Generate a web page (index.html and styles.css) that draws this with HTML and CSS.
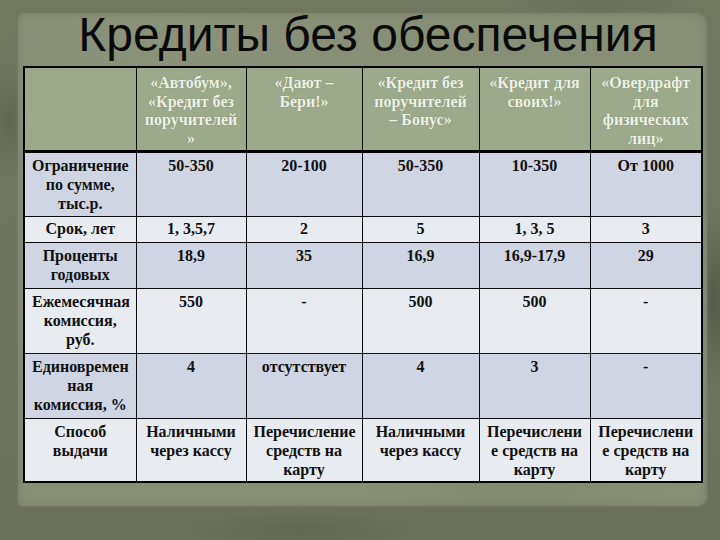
FILE: index.html
```html
<!DOCTYPE html>
<html lang="ru">
<head>
<meta charset="utf-8">
<title>Кредиты без обеспечения</title>
<link rel="stylesheet" href="styles.css">
</head>
<body>
<div class="slide">
  <div class="panel">
    <h1 class="title">Кредиты без обеспечения</h1>
    <table class="credits">
      <colgroup>
        <col class="c0"><col class="c1"><col class="c2"><col class="c3"><col class="c4"><col class="c5">
      </colgroup>
      <thead>
        <tr class="head">
          <th></th>
          <th>«Автобум», «Кредит без поручителей »</th>
          <th>«Дают – Бери!»</th>
          <th>«Кредит без поручителей – Бонус»</th>
          <th>«Кредит для своих!»</th>
          <th>«Овердрафт для физических лиц»</th>
        </tr>
      </thead>
      <tbody>
        <tr class="odd r1">
          <td>Ограничение по сумме, тыс.р.</td><td>50-350</td><td>20-100</td><td>50-350</td><td>10-350</td><td>От 1000</td>
        </tr>
        <tr class="even r2">
          <td>Срок, лет</td><td>1, 3,5,7</td><td>2</td><td>5</td><td>1, 3, 5</td><td>3</td>
        </tr>
        <tr class="odd r3">
          <td>Проценты годовых</td><td>18,9</td><td>35</td><td>16,9</td><td>16,9-17,9</td><td>29</td>
        </tr>
        <tr class="even r4">
          <td>Ежемесячная комиссия, руб.</td><td>550</td><td>-</td><td>500</td><td>500</td><td>-</td>
        </tr>
        <tr class="odd r5">
          <td>Единовремен ная комиссия, %</td><td>4</td><td>отсутствует</td><td>4</td><td>3</td><td>-</td>
        </tr>
        <tr class="even r6">
          <td>Способ выдачи</td><td>Наличными через кассу</td><td>Перечисление средств на карту</td><td>Наличными через кассу</td><td>Перечислени е средств на карту</td><td>Перечислени е средств на карту</td>
        </tr>
      </tbody>
    </table>
  </div>
</div>
</body>
</html>
```

FILE: styles.css
```css
html, body {
  margin: 0;
  padding: 0;
}

body {
  width: 720px;
  height: 540px;
  overflow: hidden;
  background: #6c7260;
}

.slide {
  box-sizing: border-box;
  width: 720px;
  height: 540px;
  padding: 13px 13px 34px 18px;
  background:
    radial-gradient(ellipse 30px 60px at 10px 120px, rgba(90,96,78,0.7), transparent),
    radial-gradient(ellipse 40px 90px at 712px 300px, rgba(80,86,70,0.8), transparent),
    radial-gradient(ellipse 120px 20px at 300px 530px, rgba(95,100,82,0.7), transparent),
    radial-gradient(ellipse 90px 18px at 600px 5px, rgba(100,106,88,0.6), transparent),
    linear-gradient(180deg, #72775f 0%, #6f755f 50%, #6a705b 100%);
}

.panel {
  box-sizing: border-box;
  height: 100%;
  padding: 0 0 0 5px;
  border-radius: 5px 12px 10px 4px;
  background:
    radial-gradient(ellipse 200px 120px at 120px 60px, rgba(150,156,132,0.3), transparent),
    radial-gradient(ellipse 160px 60px at 500px 470px, rgba(120,126,104,0.35), transparent),
    #878f76;
  box-shadow: 0 0 3px 1px rgba(120,128,105,0.6), inset 0 0 8px rgba(105,112,92,0.6);
}

.title {
  margin: 0;
  height: 53px;
  font-family: "Liberation Sans", Arial, sans-serif;
  font-weight: normal;
  font-size: 48px;
  line-height: 44px;
  color: #0a0a0a;
  text-align: center;
  padding-left: 6px;
}

.credits {
  border-collapse: collapse;
  table-layout: fixed;
  width: 678px;
  font-family: "Liberation Serif", "Times New Roman", serif;
  font-weight: bold;
  font-size: 16px;
  line-height: 19px;
  color: #111;
  text-align: center;
  border: 2px solid #050505;
}

.c0 { width: 112px; }
.c1 { width: 110px; }
.c2 { width: 116px; }
.c3 { width: 117px; }
.c4 { width: 111px; }
.c5 { width: 112px; }

.credits th,
.credits td {
  border: 1.5px solid #0c0c0c;
  vertical-align: top;
  padding: 3px 7px 0;
  overflow: hidden;
}

.credits th {
  font-weight: bold;
  color: #eef1e6;
  background: #9ca98b;
  padding-top: 6px;
  text-shadow: 0 0 1px rgba(90,100,70,0.6);
  line-height: 18.5px;
}

.head { height: 84px; }
.head th { border-bottom: 3px solid #000; }

.odd td { background: #cfd5e3; }
.even td { background: #e8ebf0; }

.r1 { height: 65px; }
.r2 { height: 26px; }
.r3 { height: 46px; }
.r4 { height: 65px; }
.r5 { height: 65px; }
.r6 { height: 64px; }

.r2 td { padding-top: 2px; }
.r3 td { padding-top: 3px; }
```
